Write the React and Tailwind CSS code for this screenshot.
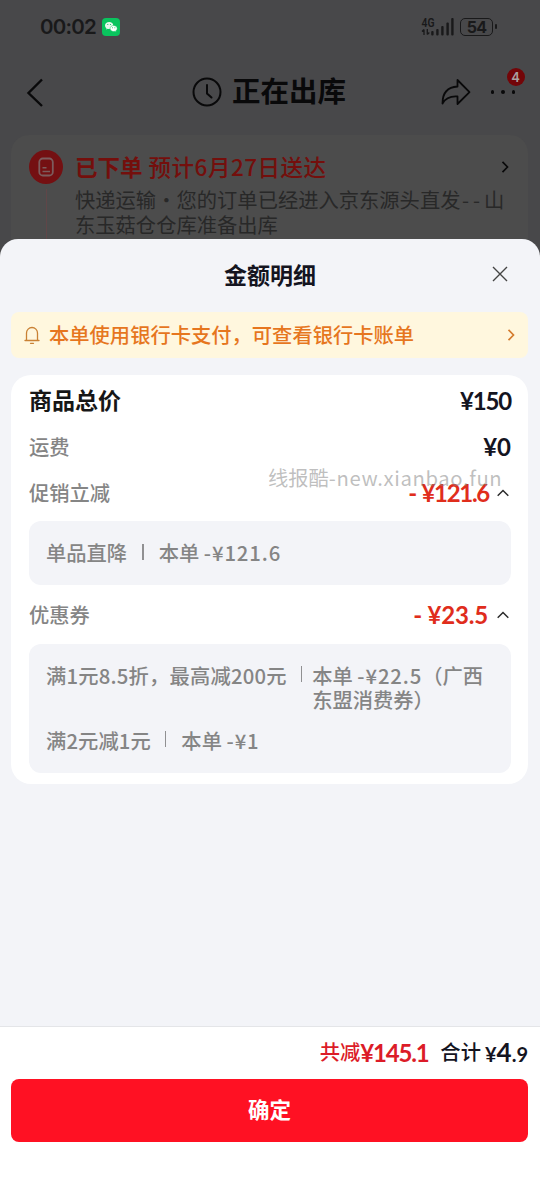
import React from 'react'

const SignalIcon = () => (
  <svg width="33" height="20" viewBox="0 0 33 20" fill="#19191a">
    <text x="0.500" y="9.500" fontSize="12" fontWeight="600" fontFamily="Roboto" textLength="13" lengthAdjust="spacingAndGlyphs">
      4G
    </text>
    <path d="M3 12.500v5.500M1 14.500l2-2M6.300 12v5.500M6.300 17.500l2-2" stroke="#19191a" strokeWidth="1.300" fill="none" />
    <rect x="10.200" y="14" width="2.400" height="4.500" rx="1" />
    <rect x="15.200" y="12" width="2.400" height="6.500" rx="1" />
    <rect x="20.200" y="9" width="2.400" height="9.500" rx="1" />
    <rect x="25.400" y="5.500" width="2.400" height="13" rx="1" />
    <rect x="30.200" y="1" width="2.400" height="17.500" rx="1" />
  </svg>
)

const WechatIcon = () => (
  <svg width="18" height="18" viewBox="0 0 18 18">
    <rect width="18" height="18" rx="4" fill="#0ac45e" />
    <path d="M7.200 4C4.800 4 3 5.500 3 7.500c0 1.100.6 2 1.500 2.700L4.200 11.600l1.600-.8c.5.100.9.200 1.400.200 2.300 0 4.100-1.500 4.100-3.500S9.500 4 7.200 4z" fill="#e9f8ee" />
    <path d="M11.700 7.500c-2 0-3.600 1.300-3.600 3s1.600 3 3.600 3c.4 0 .8-.100 1.200-.200l1.300.700-.300-1.200c.8-.5 1.300-1.400 1.300-2.300 0-1.700-1.600-3-3.500-3z" fill="#fff" stroke="#0ac45e" strokeWidth=".5" />
    <circle cx="5.800" cy="6.500" r=".6" fill="#0ac45e" />
    <circle cx="8.500" cy="6.500" r=".6" fill="#0ac45e" />
    <circle cx="10.500" cy="9.800" r=".5" fill="#0ac45e" />
    <circle cx="12.900" cy="9.800" r=".5" fill="#0ac45e" />
  </svg>
)

const ShareIcon = () => (
  <svg width="30" height="28" viewBox="0 0 30 28" fill="none" stroke="#09090a" strokeWidth="1.800" strokeLinejoin="round">
    <path d="M16.500 2L28.500 14.200 16.500 26v-7.500C9 18 4.500 20 1.500 25.500 1.500 14.500 7 9 16.500 8.500z" />
  </svg>
)

const ClockIcon = () => (
  <svg width="30" height="30" viewBox="0 0 30 30" fill="none" stroke="#09090a" strokeWidth="2">
    <circle cx="15" cy="15" r="13.500" />
    <path d="M15 8v8.500l4.500 4" strokeLinecap="round" />
  </svg>
)

const OrderIcon = () => (
  <svg width="34" height="34" viewBox="0 0 34 34" fill="none">
    <circle cx="17" cy="17" r="17" fill="#741012" />
    <rect x="10.300" y="8.500" width="13.500" height="17" rx="3.500" stroke="#7c5c5d" strokeWidth="1.800" />
    <path d="M13.500 17.800h4M13.500 21.500h7.500" stroke="#7c5c5d" strokeWidth="1.600" />
  </svg>
)

const BellIcon = () => (
  <svg width="16" height="20" viewBox="0 0 16 20" fill="none" stroke="#c98134" strokeWidth="1.300" strokeLinecap="round" strokeLinejoin="round">
    <path d="M1 15.500h14M2.500 15.500V8a5.500 5.500 0 0 1 11 0v7.500M6.500 18.300h3" />
  </svg>
)

const ChevronRight = ({ color }) => (
  <svg width="8" height="14" viewBox="0 0 8 14" fill="none" stroke={color} strokeWidth="1.700">
    <path d="M1.500 1.800L6.500 7l-5 5.200" />
  </svg>
)

const ChevronUp = () => (
  <svg width="12" height="8" viewBox="0 0 12 8" fill="none" stroke="#2b2b2b" strokeWidth="1.500">
    <path d="M.7 6.800L6 1.500l5.300 5.300" />
  </svg>
)

const Divider = ({ className }) => (
  <span className={`block w-[1.500px] h-4 bg-[#909092] ${className}`} />
)

const Price = ({ className, children }) => (
  <span className={`font-['Lato','Noto_Sans_CJK_SC',sans-serif] text-[24px] font-bold ${className}`}>
    {children}
  </span>
)

const App = () => {
  return (
    <div className="relative w-[540px] h-[1195px] flex flex-col overflow-hidden whitespace-nowrap bg-[#48484a] font-['Noto_Sans_CJK_SC',sans-serif]">
      {/* 订单页(遮罩下) */}
      <div className="h-[259px] shrink-0">
        <div className="h-[53px] flex items-center justify-between pl-[40px] pr-[43px]">
          <div className="flex items-center gap-[6px]">
            <span className="w-[56px] pt-px text-[20.500px] font-semibold text-[#19191a] font-['Inter','Noto_Sans_CJK_SC',sans-serif] tracking-[-0.800px]">
              00:02
            </span>
            <WechatIcon />
          </div>
          <div className="flex items-center gap-[6px]">
            <SignalIcon />
            <div className="flex items-center gap-[2px]">
              <span className="flex items-center justify-center w-[33px] h-[18px] rounded-[5px] border-[1.500px] border-[#19191a] text-[16px] leading-none font-bold text-[#19191a] font-['Inter',sans-serif] tracking-[-0.800px]">
                54
              </span>
              <span className="w-[2px] h-[5px] rounded-sm bg-[#19191a]" />
            </div>
          </div>
        </div>

        <div className="h-[82px] flex items-center pb-[4px] pl-[26px] pr-[25px]">
          <svg width="18" height="30" viewBox="0 0 18 30" fill="none" stroke="#09090a" strokeWidth="2.400">
            <path d="M16 2.500L2.500 16 16 29" />
          </svg>
          <div className="flex items-center gap-[10px] ml-[148px]">
            <ClockIcon />
            <h1 className="pb-[3px] text-[28.500px] leading-none font-bold text-[#09090a]">正在出库</h1>
          </div>
          <div className="flex items-center ml-auto gap-[20px]">
            <ShareIcon />
            <div className="relative flex gap-[7px]">
              <span className="w-[3.500px] h-[3.500px] rounded-full bg-[#09090a]" />
              <span className="w-[3.500px] h-[3.500px] rounded-full bg-[#09090a]" />
              <span className="w-[3.500px] h-[3.500px] rounded-full bg-[#09090a]" />
              <span className="absolute left-[16px] -top-[22px] w-[18px] h-[18px] rounded-full bg-[#730508] text-[#aaa0a0] text-[13px] leading-[18px] font-semibold text-center font-['Inter',sans-serif]">
                4
              </span>
            </div>
          </div>
        </div>

        <div className="ml-[11px] mr-[12px] h-[124px] rounded-t-[18px] bg-[#4c4c4c] flex pl-[18px] pr-[19px] pt-[15px]">
          <div className="flex flex-col items-center gap-[5px]">
            <OrderIcon />
            <span className="w-px flex-1 bg-[#604648]" />
          </div>
          <div className="ml-[12px] flex-1">
            <div className="h-[34px] flex items-center justify-between">
              <p className="pb-px text-[22.500px] font-bold text-[#740f0c]">
                已下单 <span className="ml-px font-medium tracking-[0.500px]">预计6月27日送达</span>
              </p>
              <ChevronRight color="#09090a" />
            </div>
            <p className="mt-[3px] text-[20.300px] leading-[25px] text-[#282828]">
              快递运输<span className="-mx-[4.500px]"> · </span>您的订单已经进入京东源头直发<span className="ml-[1.500px] tracking-[4px]">--</span>山
              <br />
              东玉菇仓仓库准备出库
            </p>
          </div>
        </div>
      </div>

      {/* 金额明细弹层 */}
      <div className="relative -mt-[20px] flex-1 flex flex-col rounded-t-[18px] bg-[#f3f4f8]">
        <div className="relative h-[73px] flex items-center justify-center">
          <h2 className="pb-[2px] text-[23px] font-bold text-[#14141f]">金额明细</h2>
          <svg className="absolute right-[32px] top-[27px]" width="16" height="16" viewBox="0 0 16 16" stroke="#444" strokeWidth="1.400">
            <path d="M1 1l14 14M15 1L1 15" />
          </svg>
        </div>

        <div className="ml-[11px] mr-[12px] h-[46px] flex items-center rounded-[8px] bg-[#fff7de] pl-[13px] pr-[13px]">
          <BellIcon />
          <span className="ml-[9px] mr-auto pb-[2px] text-[20.300px] font-medium text-[#e6761e]">
            本单使用银行卡支付，可查看银行卡账单
          </span>
          <ChevronRight color="#d47b2e" />
        </div>

        <div className="ml-[11px] mr-[12px] mt-[17px] pt-[3px] pb-[11px] pl-[18px] pr-[17px] rounded-[20px] bg-white text-[20.300px] font-medium text-[#858585]">
          <div className="h-[46px] flex items-center justify-between">
            <span className="pb-[4px] text-[23px] font-bold text-[#161616]">商品总价</span>
            <Price className="tracking-[-1.200px] text-[#14141f]">¥150</Price>
          </div>
          <div className="h-[46px] flex items-center justify-between">
            <span className="pb-[2px]">运费</span>
            <Price className="text-[#14141f]">¥0</Price>
          </div>
          <div className="h-[46px] flex items-center pr-[2px]">
            <span className="mr-auto pb-[2px]">促销立减</span>
            <Price className="mr-[8px] tracking-[-1.300px] text-[#e02d1c]">
              -<span className="ml-px"> ¥121.6</span>
            </Price>
            <ChevronUp />
          </div>
          <div className="mt-[5px] h-[64px] flex items-center rounded-[12px] bg-[#f3f4f8] px-[17px]">
            <span className="pb-[2px]">单品直降</span>
            <Divider className="ml-[15px] mr-[15px] mb-[2px]" />
            <span className="pb-[2px]">本单 <span className="tracking-[0.900px]">-¥121.6</span></span>
          </div>
          <div className="mt-[7px] h-[46px] flex items-center pr-[2px]">
            <span className="mr-auto pb-[2px]">优惠券</span>
            <Price className="mr-[9px] tracking-[-0.200px] text-[#e02d1c]">- ¥23.5</Price>
            <ChevronUp />
          </div>
          <div className="mt-[6px] h-[129px] rounded-[12px] bg-[#f3f4f8] px-[17px] pt-[19px] leading-[24px]">
            <div className="flex">
              <span className="tracking-[0.200px]">满1元8.5折，最高减200元</span>
              <Divider className="ml-[14px] mr-[10px] mt-[3px]" />
              <span>
                本单 <span className="tracking-[0.900px]">-¥22.5</span>（广西
                <br />
                东盟消费券）
              </span>
            </div>
            <div className="mt-[17px] flex">
              <span className="tracking-[0.100px]">满2元减1元</span>
              <Divider className="ml-[14px] mr-[15px] mt-[3px]" />
              <span>本单 <span className="tracking-[0.900px]">-¥1</span></span>
            </div>
          </div>
        </div>

        {/* 底部合计 */}
        <div className="mt-auto h-[169px] border-t border-[#e4e5e8] bg-white pl-[11px] pr-[12px]">
          <div className="h-[52px] flex items-center justify-end text-[20.300px] font-medium">
            <span className="pb-[3px] text-[#dc1c28]">共减</span>
            <Price className="tracking-[-1.200px] text-[#dc1c28]">¥145.1</Price>
            <span className="ml-[12px] pb-[3px] text-[#14141f]">合计</span>
            <span className="ml-[4px] pb-[2px] flex items-baseline text-[20px] font-bold text-[#14141f] font-['Lato','Noto_Sans_CJK_SC',sans-serif]">
              ¥<span className="text-[26px]">4</span>.9
            </span>
          </div>
          <button className="block w-full h-[63px] pb-[2px] rounded-[8px] bg-[#ff1123] text-[21.500px] font-bold text-white">
            确定
          </button>
        </div>
      </div>

      {/* 水印 */}
      <span className="absolute left-[268px] top-[462px] text-[20.300px] leading-[30px] text-[#808080]/50">
        线报酷<span className="tracking-[0.600px]">-new.xianbao.fun</span>
      </span>
    </div>
  )
}

export default App
